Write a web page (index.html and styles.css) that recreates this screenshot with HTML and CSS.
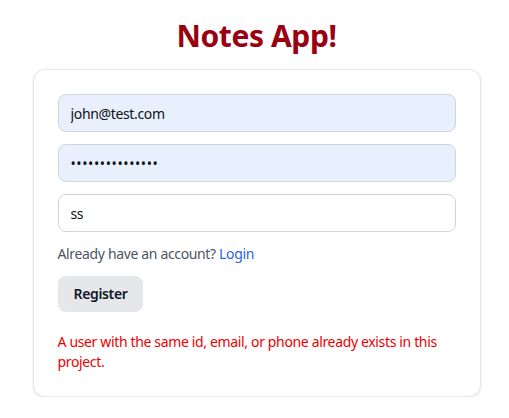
FILE: index.html
```html
<!DOCTYPE html>
<html lang="en">
<head>
<meta charset="utf-8">
<title>Notes App!</title>
<link rel="stylesheet" href="styles.css">
</head>
<body>
<main class="page">
  <h1 class="title">Notes App!</h1>
  <div class="card">
    <form class="form">
      <input class="field autofill" type="email" value="john@test.com">
      <input class="field autofill pw" type="password" value="passwordpasswor">
      <input class="field" type="text" value="ss">
      <p class="hint">Already have an account? <a class="link" href="#">Login</a></p>
      <div><button class="btn" type="button">Register</button></div>
      <p class="error">A user with the same id, email, or phone already exists in this project.</p>
    </form>
  </div>
</main>
</body>
</html>
```

FILE: styles.css
```css
* { box-sizing: border-box; }
html, body { margin: 0; padding: 0; background: #fff; }
body {
  font-family: "Noto Sans", "Open Sans", sans-serif;
  font-size: 14px;
  line-height: 20px;
  letter-spacing: -0.35px;
  color: #111827;
}
.page {
  padding: 18px 0 0 4px;
}
.title {
  margin: 0 0 15px;
  text-align: center;
  font-size: 30px;
  line-height: 36px;
  font-weight: 700;
  letter-spacing: -0.4px;
  color: #990010;
}
.card {
  width: 448px;
  margin: 0 auto;
  padding: 24px;
  border: 1px solid #e5e7eb;
  border-radius: 12px;
  box-shadow: 0 1px 3px rgba(0,0,0,0.1);
  background: #fff;
}
.form {
  display: flex;
  flex-direction: column;
  gap: 12px;
}
.field {
  display: block;
  width: 100%;
  height: 38px;
  padding: 0 12px;
  border: 1px solid #d1d5db;
  border-radius: 8px;
  font: inherit;
  letter-spacing: inherit;
  color: #111;
  background: #fff;
  outline: none;
}
.field.autofill { background: #e8f0fe; }
.field.pw { letter-spacing: 0.6px; }
.hint {
  margin: 0;
  color: #4b5563;
}
.link { color: #2563eb; text-decoration: none; }
.btn {
  height: 36px;
  padding: 0 16px;
  border: none;
  border-radius: 8px;
  background: #e5e7eb;
  color: #111827;
  font: inherit;
  letter-spacing: inherit;
  font-weight: 600;
}
.error {
  margin: 8px 0 0;
  color: #ee0000;
}
```
